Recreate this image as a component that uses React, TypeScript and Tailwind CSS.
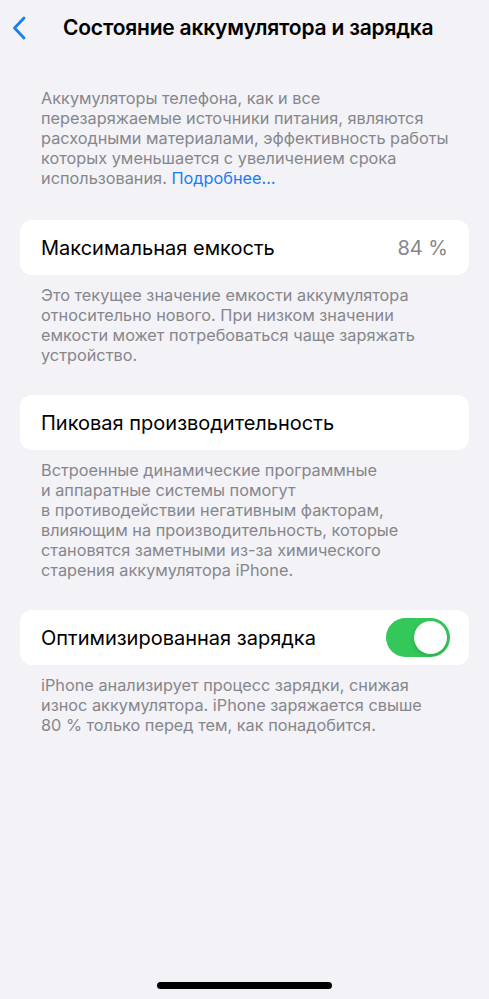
import React, { useState } from "react";

const Chevron = () => (
  <svg width="14" height="24" viewBox="0 0 14 24" fill="none">
    <path
      d="M12 2L2.5 12L12 22"
      stroke="#1a7df3"
      strokeWidth="2.8"
      strokeLinecap="round"
      strokeLinejoin="round"
    />
  </svg>
);

const Footer = ({ lines }: { lines: React.ReactNode[] }) => (
  <p className="px-[41px] pt-[10px] text-[16.3px] leading-[20px] text-[#86868b]">
    {lines.map((line, i) => (
      <span key={i} className="block whitespace-nowrap">
        {line}
      </span>
    ))}
  </p>
);

const Toggle = ({ on, onChange }: { on: boolean; onChange: () => void }) => (
  <button
    onClick={onChange}
    className={`flex h-[39px] w-[64px] items-center rounded-full p-[3px] transition-colors ${
      on ? "justify-end bg-[#34c759]" : "justify-start bg-[#e3e3e8]"
    }`}
  >
    <span className="block h-[33px] w-[33px] rounded-full bg-white shadow-[0_2px_4px_rgba(0,0,0,0.15)]" />
  </button>
);

const App = () => {
  const [optimized, setOptimized] = useState(true);

  return (
    <div
      className="flex min-h-[999px] w-full flex-col bg-[#f2f2f7] text-black"
      style={{ fontFamily: "Inter, 'Noto Sans', sans-serif" }}
    >
      {/* nav bar */}
      <div className="flex h-[56px] items-center">
        <button className="flex h-full w-[63px] items-center pl-[12px] pb-[1px]">
          <Chevron />
        </button>
        <h1 className="text-[21px] font-semibold tracking-[-0.2px]">
          Состояние аккумулятора и зарядка
        </h1>
      </div>

      <div className="pt-[22px]">
        <Footer
          lines={[
            "Аккумуляторы телефона, как и все",
            "перезаряжаемые источники питания, являются",
            "расходными материалами, эффективность работы",
            "которых уменьшается с увеличением срока",
            <>
              использования.{" "}
              <a className="text-[#1a7df3]" href="#">
                Подробнее…
              </a>
            </>,
          ]}
        />
      </div>

      <div className="mx-[20px] mt-[32px] flex h-[55px] items-center justify-between rounded-[12px] bg-white px-[21px]">
        <span className="text-[20px]">Максимальная емкость</span>
        <span className="text-[20px] text-[#86868b]">84 %</span>
      </div>
      <Footer
        lines={[
          "Это текущее значение емкости аккумулятора",
          "относительно нового. При низком значении",
          "емкости может потребоваться чаще заряжать",
          "устройство.",
        ]}
      />

      <div className="mx-[20px] mt-[30px] flex h-[55px] items-center rounded-[12px] bg-white px-[21px]">
        <span className="text-[20px]">Пиковая производительность</span>
      </div>
      <Footer
        lines={[
          "Встроенные динамические программные",
          "и аппаратные системы помогут",
          "в противодействии негативным факторам,",
          "влияющим на производительность, которые",
          "становятся заметными из-за химического",
          "старения аккумулятора iPhone.",
        ]}
      />

      <div className="mx-[20px] mt-[30px] flex h-[55px] items-center justify-between rounded-[12px] bg-white pl-[21px] pr-[19px]">
        <span className="text-[20px]">Оптимизированная зарядка</span>
        <Toggle on={optimized} onChange={() => setOptimized(!optimized)} />
      </div>
      <Footer
        lines={[
          "iPhone анализирует процесс зарядки, снижая",
          "износ аккумулятора. iPhone заряжается свыше",
          "80 % только перед тем, как понадобится.",
        ]}
      />

      <div className="flex-1" />
      {/* home indicator */}
      <div className="flex justify-center pb-[10px]">
        <div className="h-[7px] w-[175px] rounded-full bg-black" />
      </div>
    </div>
  );
};

export default App;
